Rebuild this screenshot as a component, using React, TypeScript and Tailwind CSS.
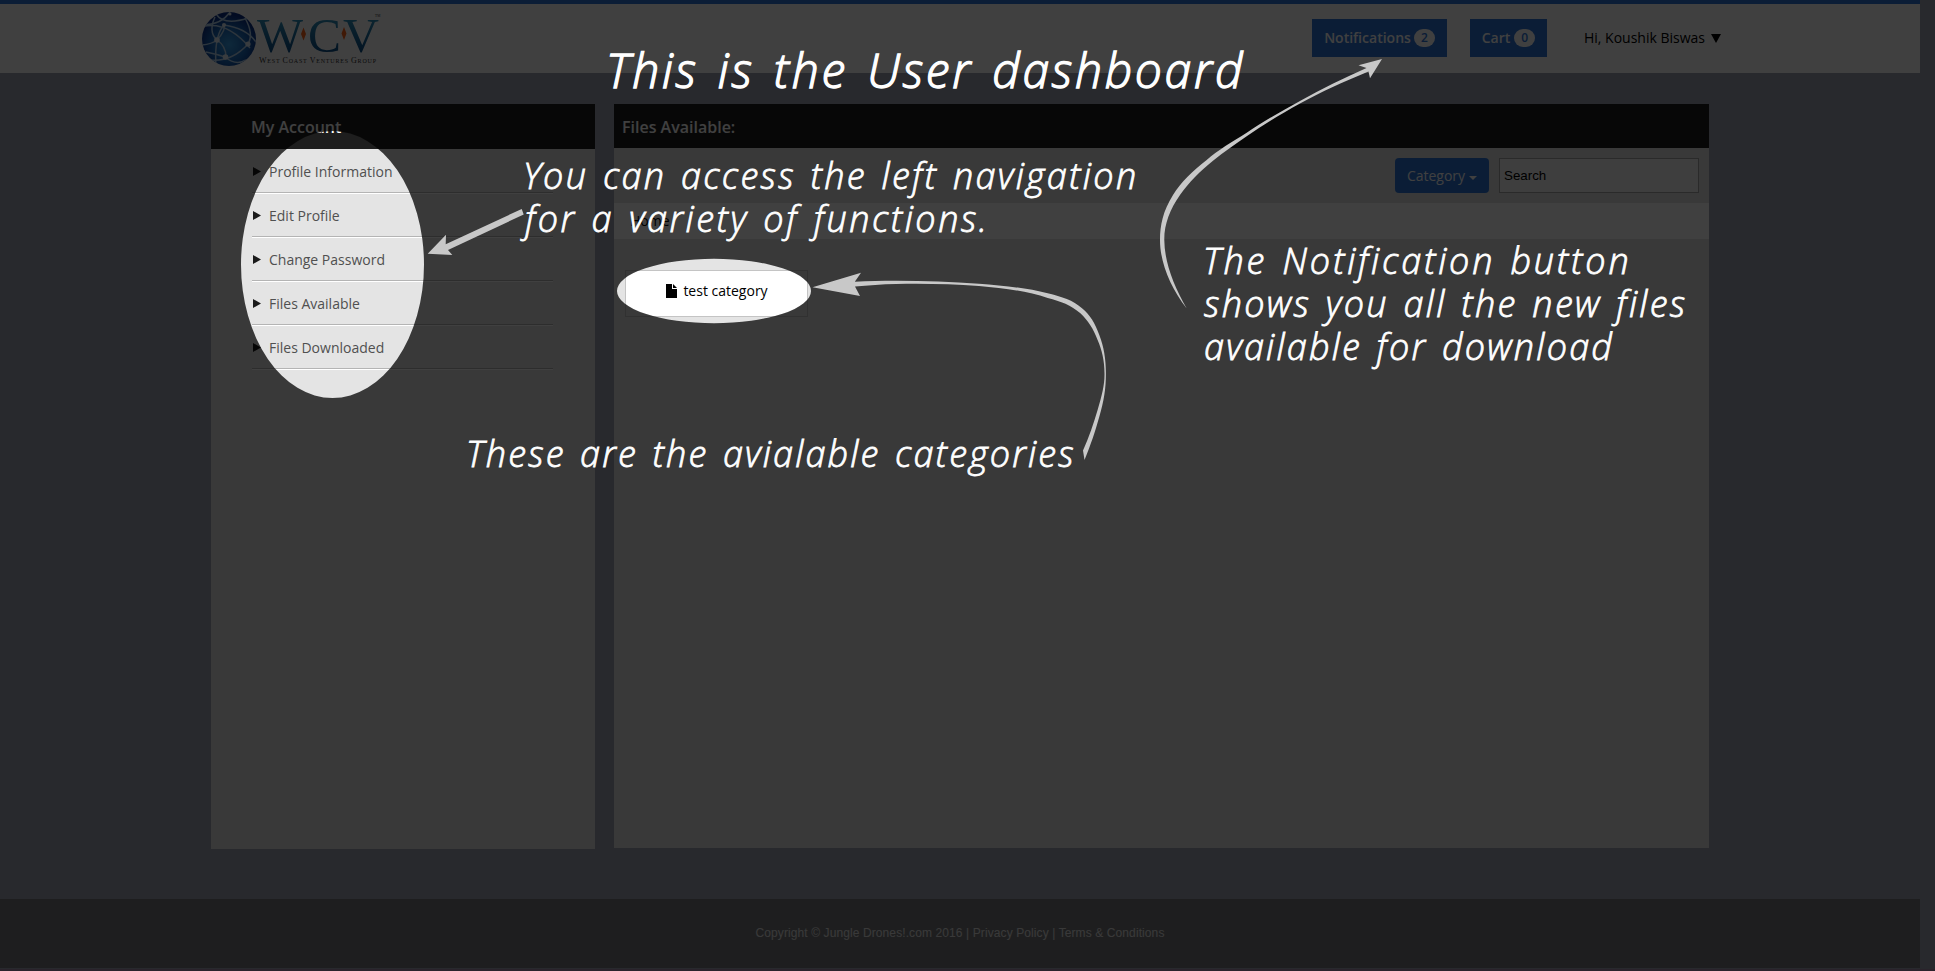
const menuItems = ["Profile Information", "Edit Profile", "Change Password", "Files Available", "Files Downloaded"];

function Logo() {
  return (
    <svg width="184" height="66" viewBox="200 4 184 66" className="block">
      <defs>
        <radialGradient id="globe" cx="0.5" cy="0.6" r="0.55">
          <stop offset="0" stopColor="#3aa0e8" />
          <stop offset="0.6" stopColor="#1a66b8" />
          <stop offset="1" stopColor="#0b2f86" />
        </radialGradient>
        <linearGradient id="letters" x1="0" y1="0" x2="0" y2="1">
          <stop offset="0" stopColor="#3aa5cc" />
          <stop offset="1" stopColor="#003a78" />
        </linearGradient>
        <clipPath id="globeClip">
          <circle cx="229" cy="39" r="27" />
        </clipPath>
      </defs>
      <circle cx="229" cy="39" r="27" fill="url(#globe)" />
      <g clipPath="url(#globeClip)" fill="none" stroke="#b4d2ee" strokeWidth="1.5">
        <path d="M202 27 Q226 20 250 48" />
        <path d="M204 25 Q222 24 230 12" />
        <path d="M216 14 Q224 26 248 18" />
        <path d="M224 25 Q214 36 216 66" />
        <path d="M215 17 Q208 32 217 40 Q226 46 226 57" />
        <path d="M202 45 Q212 44 217 40" />
        <path d="M210 60 Q232 62 248 44 Q254 34 245 18" />
        <path d="M224 25 Q246 28 256 42" />
        <path d="M217 40 Q226 30 224 25" />
        <path d="M206 52 Q216 54 225 57 Q236 66 246 60" />
      </g>
      <g fill="#e4f0fa">
        <circle cx="217" cy="40" r="2.8" />
        <circle cx="248" cy="44" r="2.6" />
        <circle cx="225.500" cy="57" r="2.8" />
        <circle cx="224" cy="25" r="2" />
        <circle cx="230" cy="14" r="1.500" />
      </g>
      <g fill="url(#letters)" fontFamily="'Liberation Serif', serif" fontSize="48">
        <text x="257" y="52" textLength="46" lengthAdjust="spacingAndGlyphs">W</text>
        <text x="308" y="52" textLength="33" lengthAdjust="spacingAndGlyphs">C</text>
        <text x="343" y="52" textLength="36" lengthAdjust="spacingAndGlyphs">V</text>
      </g>
      <path d="M303.500 27.500 L306 34 L303.500 40.500 L301 34Z M344 27 L346.500 33.500 L344 40 L341.500 33.500Z" fill="#ff6418" />
      <g fill="#333" fontFamily="'Liberation Serif', serif">
        <text x="259" y="63" fontSize="6" textLength="117" lengthAdjust="spacing">
          <tspan fontSize="8">W</tspan>EST <tspan fontSize="8">C</tspan>OAST <tspan fontSize="8">V</tspan>ENTURES <tspan fontSize="8">G</tspan>ROUP
        </text>
        <text x="375" y="17" fontSize="3.500">TM</text>
      </g>
    </svg>
  );
}

function Header() {
  return (
    <header className="flex h-[73px] w-[1920px] items-start border-t-4 border-[#2c74d8] bg-white">
      <div className="ml-[200px] w-[1112px]">
        <Logo />
      </div>
      <button className="mt-[15px] flex h-[38px] w-[135px] items-center justify-center gap-[3px] bg-[#2c74d8] text-sm font-semibold text-white">
        Notifications
        <span className="flex h-[18px] w-[21px] items-center justify-center rounded-[10px] bg-white text-xs font-semibold text-[#2c74d8]">2</span>
      </button>
      <button className="mt-[15px] ml-[23px] flex h-[38px] w-[77px] items-center justify-center gap-1 bg-[#2c74d8] text-sm font-semibold text-white">
        Cart
        <span className="flex h-[18px] w-[21px] items-center justify-center rounded-[10px] bg-white text-xs font-semibold text-[#2c74d8]">0</span>
      </button>
      <div className="mt-[15px] ml-[37px] flex h-[38px] items-center gap-[6px] text-sm text-black">
        Hi, Koushik Biswas
        <svg width="10" height="9" viewBox="0 0 10 9"><path d="M0 0H10L5 9Z" /></svg>
      </div>
    </header>
  );
}

function Sidebar() {
  return (
    <aside className="h-[745px] w-[384px] bg-[#e4e4e4]">
      <h2 className="flex h-[45px] items-center bg-[#1e1e1e] pl-10 text-base font-semibold text-white">My Account</h2>
      <ul className="w-[342px] pl-[41px]">
        {menuItems.map((item) => (
          <li key={item} className="flex h-11 items-center gap-2 border-b border-[#b4b4b4] pt-[2px] text-sm text-[#505050] shadow-[0_1px_0_#fff]">
            <svg width="8" height="9" viewBox="0 0 8 9" className="ml-px fill-[#1a1a1a]"><path d="M0 0L8 4.500L0 9Z" /></svg>
            {item}
          </li>
        ))}
      </ul>
    </aside>
  );
}

function Files() {
  return (
    <main className="h-[744px] w-[1095px] bg-[#e4e4e4]">
      <h2 className="flex h-11 items-center bg-[#1e1e1e] pt-[2px] pl-2 text-base font-semibold text-white">Files Available:</h2>
      <div className="flex h-[55px] items-center justify-end gap-[10px] pr-[10px]">
        <button className="flex h-[35px] w-[94px] items-center justify-center gap-1 rounded bg-[#2c74d8] text-sm text-white">
          Category
          <svg width="8" height="4" viewBox="0 0 8 4" className="mt-1 fill-white"><path d="M0 0H8L4 4Z" /></svg>
        </button>
        <div className="flex h-[35px] w-[200px] items-center border border-[#a8a8a8] bg-[#f8f8f8] pl-1 font-['Liberation_Sans',sans-serif] text-[13.333px] text-black">Search</div>
      </div>
      <div className="flex h-9 items-center bg-white pl-4 text-sm text-black">Home</div>
      <div className="relative mt-[31px] ml-[11px] flex h-[47px] w-[183px] items-center justify-center gap-[6px] border border-[#c4c4c4] pb-[6px] pl-px text-sm text-black">
        <span className="absolute inset-0 bg-white [clip-path:ellipse(97px_32px_at_88px_20px)]" />
        <svg width="11" height="14" viewBox="0 0 11 14" className="relative"><path d="M0 0H6V5H11V14H0Z M7 0L11 4H7Z" /></svg>
        <span className="relative">test category</span>
      </div>
    </main>
  );
}

type Note = { text: string; place: string };

const notes: Note[] = [
  { text: "This is the User dashboard", place: "left-[606px] top-[37px] text-[48px] leading-[66px] tracking-[2.7px] [word-spacing:4px] [-webkit-text-stroke:1.3px_white]" },
  { text: "You can access the left navigation", place: "left-[523px] top-[151px] text-[36px] leading-[49px] tracking-[2.3px] [word-spacing:3px] [-webkit-text-stroke:0.8px_white]" },
  { text: "for a variety of functions.", place: "left-[525px] top-[194px] text-[36px] leading-[49px] tracking-[2.5px] [word-spacing:3px] [-webkit-text-stroke:0.8px_white]" },
  { text: "The Notification button", place: "left-[1203px] top-[236px] text-[36px] leading-[49px] tracking-[2.8px] [word-spacing:3px] [-webkit-text-stroke:0.8px_white]" },
  { text: "shows you all the new files", place: "left-[1204px] top-[279px] text-[36px] leading-[49px] tracking-[2.3px] [word-spacing:3px] [-webkit-text-stroke:0.8px_white]" },
  { text: "available for download", place: "left-[1204px] top-[322px] text-[36px] leading-[49px] tracking-[2.2px] [word-spacing:3px] [-webkit-text-stroke:0.8px_white]" },
  { text: "These are the avialable categories", place: "left-[466px] top-[429px] text-[36px] leading-[49px] tracking-[2.150px] [word-spacing:3px] [-webkit-text-stroke:0.8px_white]" },
];

function Tour() {
  return (
    <div className="absolute inset-0">
      <svg width="1935" height="971" viewBox="0 0 1935 971" className="block">
        <path
          fillRule="evenodd"
          fill="#000"
          fillOpacity="0.75"
          d="M0 0H1935V971H0Z M241 264.500a91.500 133.500 0 1 0 183 0a91.500 133.500 0 1 0 -183 0Z M617 291a97 32.200 0 1 0 194 0a97 32.200 0 1 0 -194 0Z"
        />
        <g fill="#c8c8c8">
          <path d="M427.700 253.700L446 234.700L445.700 244.300L521.700 209L523.700 214.500L448 250L452.300 255Z" />
          <path d="M1382 59L1358.500 65.300L1366.500 68C1344 78 1321 89 1300 101C1281 111.500 1262 122 1246.700 132.800C1232 142 1218 150 1206.700 160C1192 171.500 1181 182 1173 195C1163 211 1160 225 1160 240C1160 262 1170 287 1186.700 308.500C1174 286 1164.500 263 1164.300 240C1164 225 1170 209 1180 195C1189 182 1200 171 1213 160.700C1224 152 1235 144 1246.700 136.200C1264 124.500 1281 114 1300 103.500C1321 92 1345 81 1368.500 71.500L1370 78.300Z" />
          <path d="M812.500 287.300L861 272.700L854.800 281.700C868 281 882 280.700 896 280.700C925 281 952 281.500 979 283.700C1003 285.500 1027 288 1047.700 293.300C1062 297 1073 300 1082 308.300C1090 315 1095 323 1099.300 335C1104 347 1106 360 1105.900 373.300C1106 388 1104 401 1099.300 416.700C1095 432 1091 444 1084.500 460L1083 450.500C1089 437 1093.500 424 1097.600 410C1102 395 1104.700 385 1104.500 373.300C1104.500 361 1102 350 1097.600 340C1093.500 329 1088 320.500 1080.400 313.300C1071 305 1061 301.500 1047.700 298C1027 291 1003 288 979 286C952 284 925 283.500 896 284C882 284 868 285.500 855 286.500L860 296Z" />
        </g>
      </svg>
      {notes.map((note) => (
        <p key={note.text} className={`absolute whitespace-nowrap font-light italic text-white ${note.place}`}>{note.text}</p>
      ))}
    </div>
  );
}

export default function App() {
  return (
    <div className="relative flex h-[971px] w-[1935px] flex-col overflow-hidden bg-[#a0a4b4] font-['Open_Sans','Noto_Sans',sans-serif]">
      <Header />
      <div className="mt-[31px] ml-[211px] flex h-[745px] gap-[19px]">
        <Sidebar />
        <Files />
      </div>
      <footer className="mt-[50px] flex h-[69px] w-[1920px] shrink-0 items-center justify-center bg-[#787a7c] pb-[2px] font-['Liberation_Sans',sans-serif] text-xs tracking-[0.1px] text-[#e4e4e4]">
        Copyright © Jungle Drones!.com 2016 | Privacy Policy | Terms &amp; Conditions
      </footer>
      <div className="mt-[1px] h-[2px] bg-[#a88cac]" />
      <Tour />
    </div>
  );
}
